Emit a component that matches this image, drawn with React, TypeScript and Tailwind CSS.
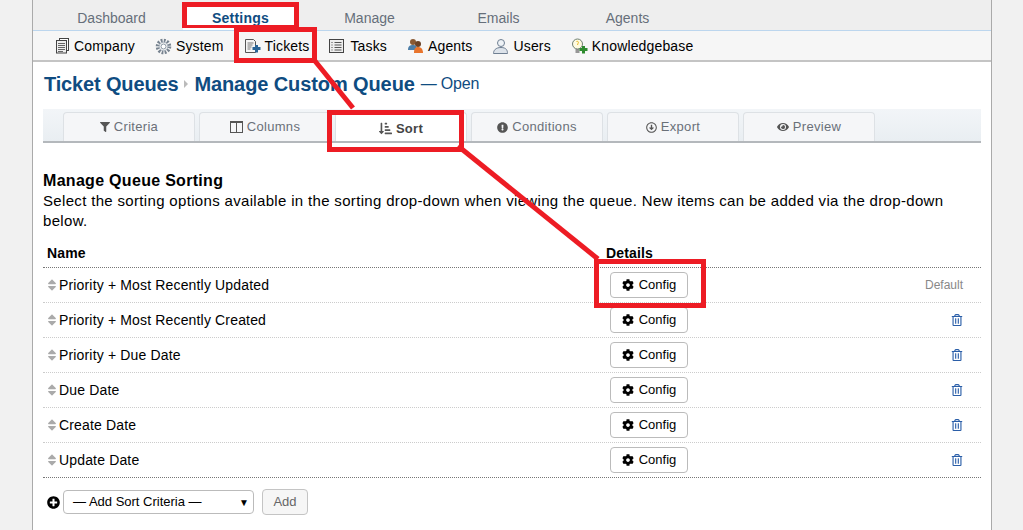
import React from "react";
import { FaFilter, FaSortAmountDownAlt, FaExclamationCircle, FaRegArrowAltCircleDown, FaEye, FaCog, FaRegTrashAlt, FaSort, FaPlusCircle } from "react-icons/fa";

const Doc = () => (
  <svg width="15" height="16" viewBox="0 0 15 16"><rect x="4.500" y="0.500" width="9" height="12" fill="#fff" stroke="#444" /><rect x="1.500" y="2.500" width="10" height="12.500" fill="#eee" stroke="#444" /><path d="M3 5.500h7M3 7.500h7M3 9.500h7M3 11.500h7M3 13.500h5" stroke="#666" /></svg>
);
const Gear = () => (
  <svg width="17" height="17" viewBox="0 0 17 17"><circle cx="8.500" cy="8.500" r="6" fill="none" stroke="#76828f" strokeWidth="3.500" strokeDasharray="1.800 1.300" /><circle cx="8.500" cy="8.500" r="4.300" fill="none" stroke="#a6b0bb" /><circle cx="8.500" cy="8.500" r="2.500" fill="#fff" stroke="#8a96a3" /></svg>
);
const TicketIcon = () => (
  <svg width="17" height="16" viewBox="0 0 17 16"><path d="M1.500 1.500h8l2 2v11h-10z" fill="#f4f4f4" stroke="#555" /><path d="M3.500 5h6M3.500 7h5M3.500 9h4M3.500 11h3" stroke="#777" /><path d="M11 7h3v2h2.500v3H14v2.500h-3V12H8.500V9H11z" fill="#2a6496" /></svg>
);
const ListIcon = () => (
  <svg width="16" height="16" viewBox="0 0 16 16"><rect x="0.500" y="1.500" width="14" height="13" fill="#eee" stroke="#444" /><path d="M5.500 4.500h7M5.500 7h7M5.500 9.500h7M5.500 12h7" stroke="#555" /><path d="M2 4.500h2M2 7h2M2 9.500h2M2 12h2" stroke="#999" /></svg>
);
const AgentsIcon = () => (
  <svg width="18" height="16" viewBox="0 0 18 16"><circle cx="6" cy="4" r="3" fill="#8a5a33" /><path d="M1 12c0-4 2-5 5-5s4 2 4 5z" fill="#4d7ea8" /><circle cx="11" cy="6" r="3" fill="#6b4226" /><path d="M7 15c0-4 1-6 4-6s5 2 5 6z" fill="#e8742c" /></svg>
);
const UsersIcon = () => (
  <svg width="17" height="17" viewBox="0 0 17 17"><circle cx="9" cy="5" r="3.500" fill="#eef2f6" stroke="#6f7f92" /><path d="M1.500 15.500c0-3 2-6 7.500-6s6.500 3 6.500 6z" fill="#dde3ea" stroke="#6f7f92" /></svg>
);
const BulbIcon = () => (
  <svg width="17" height="17" viewBox="0 0 17 17"><circle cx="6.500" cy="6" r="5" fill="#fffbe0" stroke="#6f7f72" /><path d="M5.500 3.500c1.500-.5 2.500.5 1.500 2L6.500 7" stroke="#e8b820" fill="none" /><path d="M4.500 12h4M4.500 14h4" stroke="#777" strokeWidth="1.500" /><path d="M11 8h3v2h2.500v3H14v2.500h-3V13H8.500v-3H11z" fill="#2e8b2e" /></svg>
);

const topTabs = ["Dashboard", "Settings", "Manage", "Emails", "Agents"];
const subNav: [string, React.ReactNode][] = [
  ["Company", <Doc />],
  ["System", <Gear />],
  ["Tickets", <TicketIcon />],
  ["Tasks", <ListIcon />],
  ["Agents", <AgentsIcon />],
  ["Users", <UsersIcon />],
  ["Knowledgebase", <BulbIcon />],
];
const Columns = () => (
  <svg width="13" height="12" viewBox="0 0 13 12"><rect x="0.500" y="0.500" width="12" height="11" fill="none" stroke="#555" /><path d="M6.500 1v10" stroke="#555" /><path d="M1 1.500h11" stroke="#555" /></svg>
);
const tabs: [string, React.ReactNode][] = [
  ["Criteria", <FaFilter size={10} />],
  ["Columns", <Columns />],
  ["Sort", <FaSortAmountDownAlt size={13} />],
  ["Conditions", <FaExclamationCircle size={11} />],
  ["Export", <FaRegArrowAltCircleDown size={11} />],
  ["Preview", <FaEye size={12} />],
];
const rows = ["Priority + Most Recently Updated", "Priority + Most Recently Created", "Priority + Due Date", "Due Date", "Create Date", "Update Date"];

const Frame = ({ className }: { className: string }) => <div className={`absolute border-[5px] border-[#ed1c24] ${className}`} />;

export default function App() {
  return (
    <div className="relative h-[530px] w-[1023px] overflow-hidden bg-[#f1f1f1] font-['Liberation_Sans',Arial,sans-serif] text-[14px] text-black">
      <div className="ml-[32px] h-[530px] w-[960px] border-x border-[#aaaaaa] bg-white">
        <nav className="flex h-[31px] gap-[14px] border-b border-[#bcd6ee] bg-[#eeeeee] pl-[21px] pt-[4px]">
          {topTabs.map((t) => (
            <div key={t} className={`flex w-[115px] items-center justify-center pt-[2px] ${t === "Settings" ? "bg-white font-bold tracking-[0.2px] text-[#0f4c81]" : "text-[#666f7a]"}`}>{t}</div>
          ))}
        </nav>
        <div className="flex h-[31px] items-center border-b-2 border-[#c4c4c4] bg-[#f6f6f6] pl-[22px] pt-[1px] tracking-[0.15px]">
          {subNav.map(([label, icon], i) => (
            <div key={label} className="mr-[20px] flex items-center">
              <span className={`flex shrink-0 ${i === 0 ? "w-[19px]" : "w-[21px]"}`}>{icon}</span>
              <span>{label}</span>
            </div>
          ))}
        </div>
        <div className="px-[10px]">
          <h1 className="flex h-[47px] items-center pb-[4px] pl-[1px] text-[20px] font-bold text-[#0f4c81]">
            <span className="tracking-[-0.15px]">Ticket Queues</span>
            <span className="mx-[6px] h-0 w-0 border-y-[4px] border-l-[4px] border-y-transparent border-l-[#bbbbbb]" />
            <span className="tracking-[-0.1px]">Manage Custom Queue</span>
            <span className="ml-[6px] text-[16px] font-normal tracking-[-0.2px]">— Open</span>
          </h1>
          <div className="flex h-[34px] gap-[4px] border-b-2 border-[#b4b8bc] bg-[linear-gradient(#f2f5f8,#e9eef2)] pl-[20px] pt-[3px]">
            {tabs.map(([label, icon]) => {
              const active = label === "Sort";
              return (
                <div key={label} className={`flex h-[29px] w-[132px] items-center justify-center gap-[4px] rounded-t border border-b-0 border-[#dde1e5] ${active ? "bg-white pt-[3px] font-bold text-[#444]" : "bg-[#f5f6f8] text-[#6a7078]"} text-[13px] tracking-[0.3px]`}>
                  <span className="text-[#555]">{icon}</span>
                  <span>{label}</span>
                </div>
              );
            })}
          </div>
          <div className="mt-[28px]">
            <h2 className="text-[16px] leading-[20px] font-bold tracking-[0.3px]">Manage Queue Sorting</h2>
            <p className="text-[15px] leading-[20px] tracking-[0.33px]">Select the sorting options available in the sorting drop-down when viewing the queue. New items can be added via the drop-down below.</p>
          </div>
          <div className="mt-[11px] flex h-[26px] items-center border-b border-dotted border-[#777] pb-[3px] pl-[4px] font-bold tracking-[0.15px]">
            <span className="w-[559px]">Name</span>
            <span>Details</span>
          </div>
          {rows.map((r, i) => (
            <div key={r} className={`flex h-[35px] items-center border-b border-dotted ${i === 5 ? "border-[#777]" : "border-[#cccccc]"}`}>
              <FaSort size={14} className="ml-[2px] text-[#aaaaaa]" />
              <span className="w-[551px] tracking-[0.16px]">{r}</span>
              <button className="flex h-[26px] w-[78px] items-center justify-center gap-[5px] rounded border border-[#bbbbbb] bg-white text-[13px]">
                <FaCog size={12} />
                <span>Config</span>
              </button>
              {i === 0 ? (
                <span className="ml-auto mr-[18px] text-[12px] text-[#888]">Default</span>
              ) : (
                <FaRegTrashAlt size={12} className="ml-auto mr-[18px] text-[#2a5ea8]" />
              )}
            </div>
          ))}
          <div className="mt-[11px] flex items-center pl-[4px]">
            <FaPlusCircle size={13} className="mr-[3px]" />
            <div className="flex h-[24px] w-[191px] items-center justify-between rounded border border-[#bbbbbb] bg-white pl-[9px] pr-[4px] text-[13px]">
              <span>— Add Sort Criteria —</span>
              <span className="text-[10px]">▼</span>
            </div>
            <button className="ml-[8px] h-[26px] w-[46px] rounded border border-[#c4c4c4] bg-[#f6f6f6] text-[13px] text-[#666]">Add</button>
          </div>
        </div>
      </div>
      <Frame className="left-[182px] top-[2px] h-[26px] w-[117px] border-b-[3px]" />
      <Frame className="left-[234px] top-[27px] h-[36px] w-[83px]" />
      <Frame className="left-[327px] top-[110px] h-[42px] w-[137px]" />
      <Frame className="left-[594px] top-[259px] h-[49px] w-[112px]" />
      <svg className="absolute left-0 top-0" width="1023" height="530" fill="none" stroke="#ed1c24" strokeWidth="5">
        <path d="M315 61L353 108" />
        <path d="M458 146L598 259" />
      </svg>
    </div>
  );
}
